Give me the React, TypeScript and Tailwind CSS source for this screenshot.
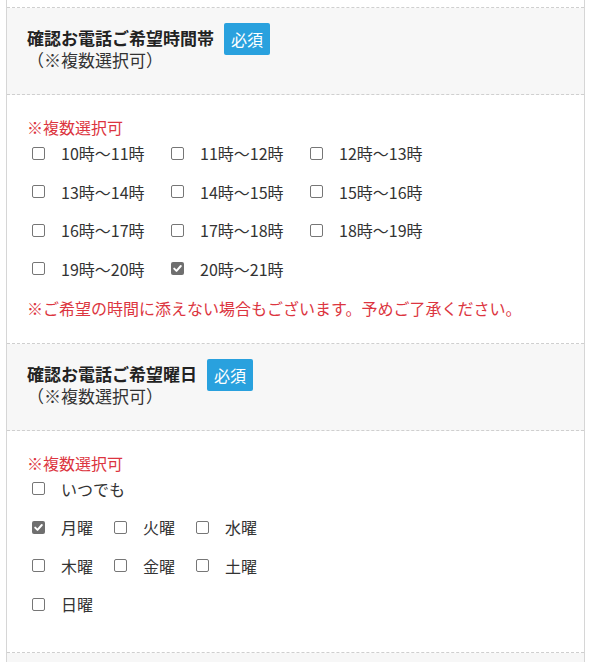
import React from "react";

const font = {
  fontFamily: '"Noto Sans CJK JP", "Noto Sans", sans-serif',
};

const times = [
  { label: "10時〜11時", checked: false },
  { label: "11時〜12時", checked: false },
  { label: "12時〜13時", checked: false },
  { label: "13時〜14時", checked: false },
  { label: "14時〜15時", checked: false },
  { label: "15時〜16時", checked: false },
  { label: "16時〜17時", checked: false },
  { label: "17時〜18時", checked: false },
  { label: "18時〜19時", checked: false },
  { label: "19時〜20時", checked: false },
  { label: "20時〜21時", checked: true },
];

const dayRows = [
  [{ label: "いつでも", checked: false }],
  [
    { label: "月曜", checked: true },
    { label: "火曜", checked: false },
    { label: "水曜", checked: false },
  ],
  [
    { label: "木曜", checked: false },
    { label: "金曜", checked: false },
    { label: "土曜", checked: false },
  ],
  [{ label: "日曜", checked: false }],
];

const Box = ({ checked }: { checked: boolean }) =>
  checked ? (
    <span className="flex h-[13px] w-[13px] shrink-0 items-center justify-center rounded-[2px] bg-[#6f6f6f]">
      <svg width="11" height="11" viewBox="0 0 11 11">
        <path
          d="M2.2 5.6 L4.5 7.9 L8.8 3"
          fill="none"
          stroke="#fff"
          strokeWidth="2"
          strokeLinecap="round"
          strokeLinejoin="round"
        />
      </svg>
    </span>
  ) : (
    <span className="block h-[13px] w-[13px] shrink-0 rounded-[2px] border border-[#767676] bg-white" />
  );

const Check = ({ label, checked }: { label: string; checked: boolean }) => (
  <label className="flex h-[32px] cursor-pointer items-center pl-[5px]">
    <Box checked={checked} />
    <span className="ml-[16px] whitespace-nowrap text-[16px] text-[#333]">
      {label}
    </span>
  </label>
);

const Head = ({ title }: { title: string }) => (
  <div className="border-b border-dashed border-[#cfcfcf] bg-[#f7f7f7] px-[20px] pb-[23px] pt-[19px]">
    <div className="flex h-[22px] items-center">
      <span className="text-[17px] font-bold leading-[22px] text-[#222]">
        {title}
      </span>
      <span className="ml-[10px] flex h-[32px] translate-y-[1px] items-center rounded-[2px] bg-[#29a1de] px-[7px] text-[16px] text-white">
        必須
      </span>
    </div>
    <div className="text-[17px] leading-[22px] text-[#333]">
      （※複数選択可）
    </div>
  </div>
);

export default function App() {
  return (
    <div className="min-h-[662px] bg-white" style={font}>
      <div className="ml-[6px] w-[579px] border-x border-[#d6d6d6]">
        <div className="h-[8px] border-b border-dashed border-[#cfcfcf]" />

        <Head title="確認お電話ご希望時間帯" />
        <div className="border-b border-dashed border-[#cfcfcf] px-[20px] pb-[23px] pt-[22px]">
          <div className="text-[16px] leading-[20px] text-[#dc3540]">
            ※複数選択可
          </div>
          <div className="grid grid-cols-[139px_139px_139px] gap-y-[6.5px]">
            {times.map((t) => (
              <Check key={t.label} label={t.label} checked={t.checked} />
            ))}
          </div>
          <p className="mt-[11px] text-[16px] leading-[24px] text-[#dc3540]">
            ※ご希望の時間に添えない場合もございます。予めご了承ください。
          </p>
        </div>

        <Head title="確認お電話ご希望曜日" />
        <div className="border-b border-dashed border-[#cfcfcf] px-[20px] pb-[32px] pt-[22px]">
          <div className="text-[16px] leading-[20px] text-[#dc3540]">
            ※複数選択可
          </div>
          <div className="flex flex-col gap-y-[6.5px]">
            {dayRows.map((row, i) => (
              <div key={i} className="grid grid-cols-[82px_82px_82px]">
                {row.map((d) => (
                  <Check key={d.label} label={d.label} checked={d.checked} />
                ))}
              </div>
            ))}
          </div>
        </div>

        <div className="h-[20px] bg-[#f7f7f7]" />
      </div>
    </div>
  );
}
